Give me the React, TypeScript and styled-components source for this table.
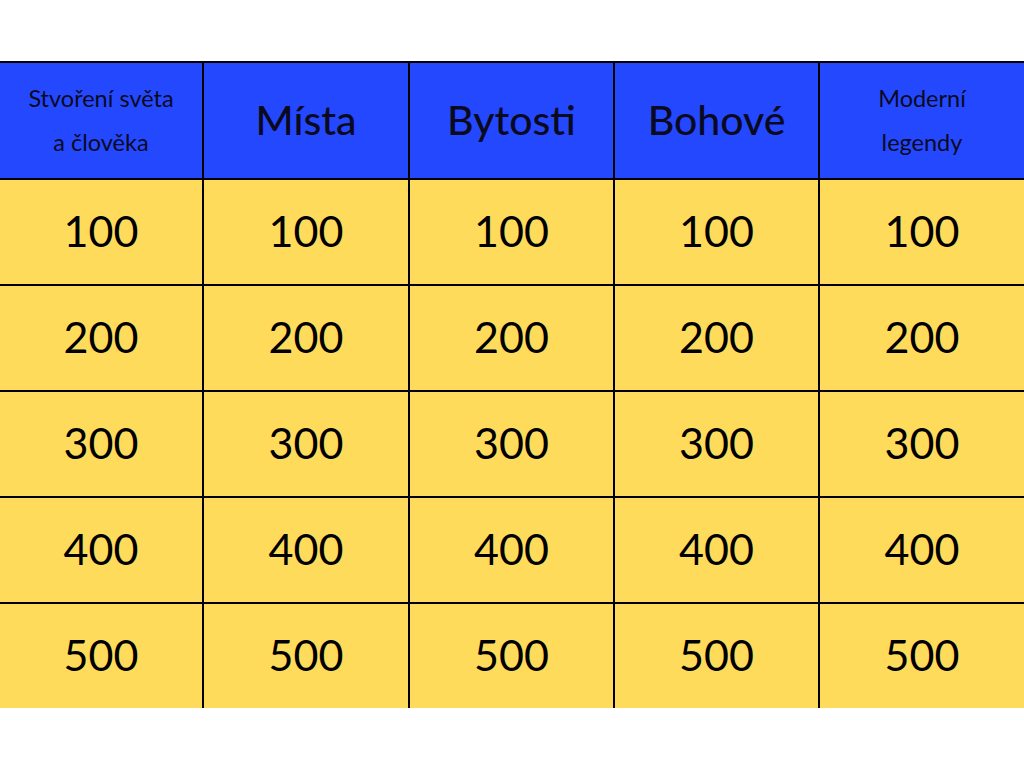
import React from "react";
import styled, { createGlobalStyle } from "styled-components";

const Global = createGlobalStyle`
  html, body { margin: 0; padding: 0; background: #ffffff; }
  body { font-family: "Lato", "Noto Sans", sans-serif; }
`;

const Page = styled.div`
  width: 1024px;
  height: 768px;
  background: #ffffff;
  padding-top: 61px;
  box-sizing: border-box;
`;

const Board = styled.div`
  height: 645px;
  overflow: hidden;
  display: grid;
  grid-template-columns: 202px 204px 203px 203px 1fr;
  grid-template-rows: 115px repeat(5, 104px);
  gap: 2px;
  padding-top: 2px;
  background: #000000;
`;

const Head = styled.div<{ $small?: boolean }>`
  background: #2448fe;
  color: #0a0a1e;
  display: flex;
  flex-direction: column;
  align-items: center;
  justify-content: center;
  text-align: center;
  padding-bottom: 2px;
  font-size: ${(p) => (p.$small ? "23.5px" : "41px")};
  line-height: ${(p) => (p.$small ? "44px" : "1")};
  font-weight: ${(p) => (p.$small ? 400 : 500)};
`;

const Cell = styled.div`
  background: #ffdb5c;
  color: #000000;
  display: flex;
  align-items: center;
  justify-content: center;
  padding-bottom: 4px;
  font-size: 43px;
  font-weight: 400;
`;

const heads: { lines: string[]; small?: boolean }[] = [
  { lines: ["Stvoření světa", "a člověka"], small: true },
  { lines: ["Místa"] },
  { lines: ["Bytosti"] },
  { lines: ["Bohové"] },
  { lines: ["Moderní", "legendy"], small: true },
];

const values = [100, 200, 300, 400, 500];

export default function App() {
  return (
    <>
      <Global />
      <Page>
        <Board>
          {heads.map((h, i) => (
            <Head key={i} $small={h.small}>
              {h.lines.map((l) => (
                <span key={l}>{l}</span>
              ))}
            </Head>
          ))}
          {values.map((v) =>
            heads.map((_, i) => <Cell key={`${v}-${i}`}>{v}</Cell>)
          )}
        </Board>
      </Page>
    </>
  );
}
